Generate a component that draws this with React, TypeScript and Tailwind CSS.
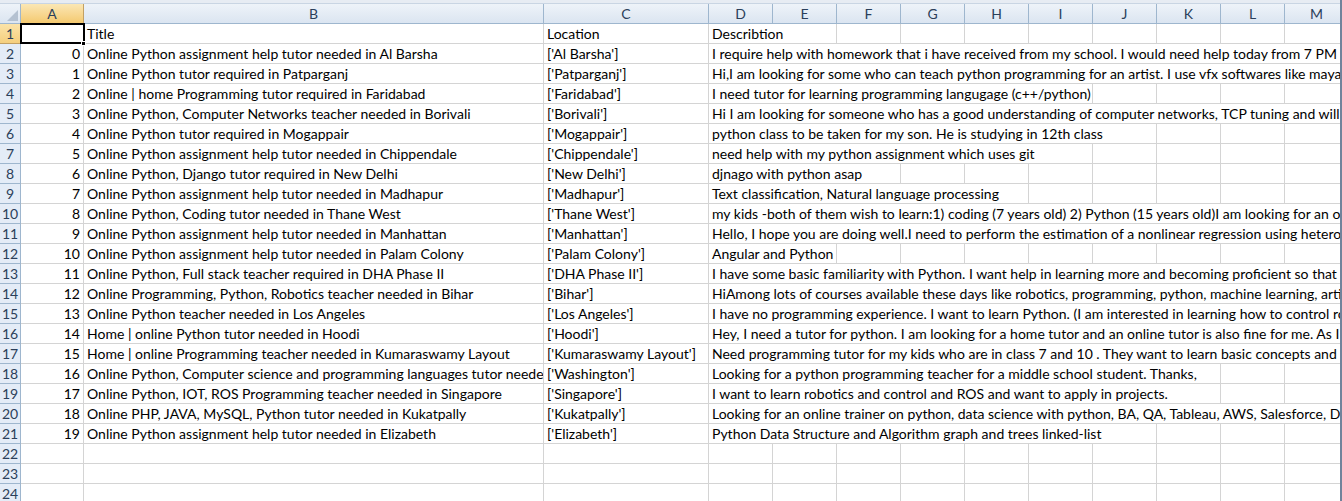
import React from "react";

type RowData = { a: string; b: string; c: string; d: string };

const rows: RowData[] = [
  { a: "", b: "Title", c: "Location", d: "Describtion" },
  { a: "0", b: "Online Python assignment help tutor needed in Al Barsha", c: "['Al Barsha']", d: "I require help with homework that i have received from my school. I would need help today from 7 PM to 9 PM" },
  { a: "1", b: "Online Python tutor required in Patparganj", c: "['Patparganj']", d: "Hi,I am looking for some who can teach python programming for an artist. I use vfx softwares like maya and houdini" },
  { a: "2", b: "Online | home Programming tutor required in Faridabad", c: "['Faridabad']", d: "I need tutor for learning programming langugage (c++/python)" },
  { a: "3", b: "Online Python, Computer Networks teacher needed in Borivali", c: "['Borivali']", d: "Hi I am looking for someone who has a good understanding of computer networks, TCP tuning and will help me" },
  { a: "4", b: "Online Python tutor required in Mogappair", c: "['Mogappair']", d: "python class to be taken for my son. He is studying in 12th class" },
  { a: "5", b: "Online Python assignment help tutor needed in Chippendale", c: "['Chippendale']", d: "need help with my python assignment which uses git" },
  { a: "6", b: "Online Python, Django tutor required in New Delhi", c: "['New Delhi']", d: "djnago with python asap" },
  { a: "7", b: "Online Python assignment help tutor needed in Madhapur", c: "['Madhapur']", d: "Text classification, Natural language processing" },
  { a: "8", b: "Online Python, Coding tutor needed in Thane West", c: "['Thane West']", d: "my kids -both of them wish to learn:1) coding (7 years old) 2) Python (15 years old)I am looking for an online tutor" },
  { a: "9", b: "Online Python assignment help tutor needed in Manhattan", c: "['Manhattan']", d: "Hello, I hope you are doing well.I need to perform the estimation of a nonlinear regression using heteroskedasticity" },
  { a: "10", b: "Online Python assignment help tutor needed in Palam Colony", c: "['Palam Colony']", d: "Angular and Python" },
  { a: "11", b: "Online Python, Full stack teacher required in DHA Phase II", c: "['DHA Phase II']", d: "I have some basic familiarity with Python. I want help in learning more and becoming proficient so that I can" },
  { a: "12", b: "Online Programming, Python, Robotics teacher needed in Bihar", c: "['Bihar']", d: "HiAmong lots of courses available these days like robotics, programming, python, machine learning, artificial" },
  { a: "13", b: "Online Python teacher needed in Los Angeles", c: "['Los Angeles']", d: "I have no programming experience. I want to learn Python. (I am interested in learning how to control robots" },
  { a: "14", b: "Home | online Python tutor needed in Hoodi", c: "['Hoodi']", d: "Hey, I need a tutor for python. I am looking for a home tutor and an online tutor is also fine for me. As I am" },
  { a: "15", b: "Home | online Programming teacher needed in Kumaraswamy Layout", c: "['Kumaraswamy Layout']", d: "Need programming tutor for my kids who are in class 7 and 10 . They want to learn basic concepts and then" },
  { a: "16", b: "Online Python, Computer science and programming languages tutor needed in Washington", c: "['Washington']", d: "Looking for a python programming teacher for a middle school student. Thanks," },
  { a: "17", b: "Online Python, IOT, ROS Programming teacher needed in Singapore", c: "['Singapore']", d: "I want to learn robotics and control and ROS and want to apply in projects." },
  { a: "18", b: "Online PHP, JAVA, MySQL, Python tutor needed in Kukatpally", c: "['Kukatpally']", d: "Looking for an online trainer on python, data science with python, BA, QA, Tableau, AWS, Salesforce, DevOps" },
  { a: "19", b: "Online Python assignment help tutor needed in Elizabeth", c: "['Elizabeth']", d: "Python Data Structure and Algorithm graph and trees linked-list" },
  { a: "", b: "", c: "", d: "" },
  { a: "", b: "", c: "", d: "" },
  { a: "", b: "", c: "", d: "" },
];

const letters = ["A", "B", "C", "D", "E", "F", "G", "H", "I", "J", "K", "L", "M"];
const gridCols = "grid shrink-0 grid-cols-[21px_63px_460px_165px_repeat(10,64px)]";
const cell = "h-[20px] border-r border-b border-[#d4d4d4] leading-[20px] min-w-0";

function HeaderRow() {
  return (
    <div className={gridCols}>
      <div className="h-[20px] border-r border-b border-[#9eb6ce] bg-gradient-to-b from-[#eef3f9] to-[#dbe5f1] flex items-end justify-end pr-[2px] pb-[2px]">
        <svg width="11" height="11" viewBox="0 0 11 11">
          <polygon points="11,0 11,11 0,11" fill="#b4c1d1" />
        </svg>
      </div>
      {letters.map((l) => (
        <div
          key={l}
          className={
            "h-[20px] border-r border-b text-center leading-[20px] " +
            (l === "A"
              ? "bg-gradient-to-b from-[#fbe7b4] to-[#f4c96f] border-[#c2a064] text-[#2b3f5a]"
              : "bg-gradient-to-b from-[#eef3f9] to-[#dbe5f1] border-[#9eb6ce] text-[#2b3f5a]")
          }
        >
          {l}
        </div>
      ))}
    </div>
  );
}

function SheetRow({ n, r }: { n: number; r: RowData }) {
  const selected = n === 1;
  return (
    <div className={gridCols}>
      <div
        className={
          "h-[20px] border-r border-b text-center leading-[20px] text-[#2b3f5a] " +
          (selected
            ? "bg-gradient-to-b from-[#fbe3a8] to-[#f5cf7e] border-[#c2a064]"
            : "bg-[#e4ecf7] border-[#9eb6ce]")
        }
      >
        {n}
      </div>
      <div className={cell + " relative text-right pr-[3px]"}>
        {r.a}
        {selected && (
          <>
            <div className="absolute -left-[1px] -top-[1px] w-[65px] h-[21px] border-2 border-black" />
            <div className="absolute -right-[3px] -bottom-[3px] w-[5px] h-[5px] bg-black border border-white z-20" />
          </>
        )}
      </div>
      <div className={cell + " overflow-hidden whitespace-nowrap pl-[3px]"}>{r.b}</div>
      <div className={cell + " overflow-hidden whitespace-nowrap pl-[3px]"}>{r.c}</div>
      <div className={cell}>
        {r.d && (
          <span className="relative z-10 block w-max h-[19px] overflow-hidden bg-white whitespace-nowrap pl-[3px] pr-[1px]">
            {r.d}
          </span>
        )}
      </div>
      {Array.from({ length: 9 }).map((_, i) => (
        <div key={i} className={cell} />
      ))}
    </div>
  );
}

export default function App() {
  return (
    <div
      className="flex w-[1342px] h-[501px] overflow-hidden bg-white text-black text-[14px]"
      style={{ fontFamily: "Lato, 'Noto Sans', sans-serif" }}
    >
      <div className="w-[1340px] h-[501px] overflow-hidden flex flex-col">
        <div className="h-[4px] shrink-0 bg-[#e7ecf3] border-b border-[#c9d5e3]" />
        <HeaderRow />
        {rows.map((r, i) => (
          <SheetRow key={i} n={i + 1} r={r} />
        ))}
      </div>
      <div className="w-[2px] h-[501px] bg-[#71839b]" />
    </div>
  );
}
